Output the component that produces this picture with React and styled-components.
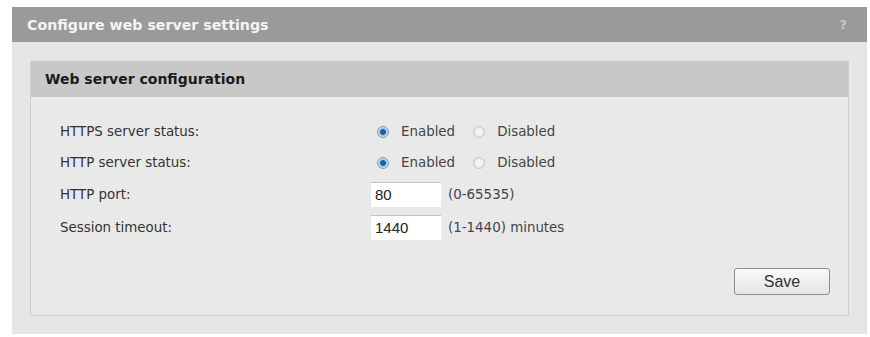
import React from "react";
import styled, { createGlobalStyle } from "styled-components";

const Global = createGlobalStyle`
  html, body { margin: 0; padding: 0; background: #ffffff; }
  body { font-family: "DejaVu Sans", Verdana, sans-serif; }
`;

const Page = styled.div`
  padding: 7px 3px 4px 12px;
`;

const Outer = styled.section`
  background: #e6e6e6;
  width: 855px;
  padding-bottom: 18px;
`;

const OuterHeader = styled.header`
  display: flex;
  align-items: center;
  justify-content: space-between;
  height: 35px;
  background: #9a9a9a;
  padding: 0 20px 0 15px;
  color: #f4f4f4;
  font-weight: bold;
  font-size: 14.2px;
`;

const Help = styled.span`
  color: #c8c8c8;
  font-size: 13px;
`;

const Inner = styled.div`
  margin: 19px 18px 0 18px;
  border: 1px solid #cfcfcf;
  border-top: none;
  background: #e9e9e9;
  height: 254px;
  display: flex;
  flex-direction: column;
`;

const InnerHeader = styled.div`
  height: 36px;
  background: #c8c8c8;
  display: flex;
  align-items: center;
  padding-left: 14px;
  font-weight: bold;
  font-size: 14px;
  color: #1a1a1a;
`;

const Form = styled.div`
  padding: 19px 0 0 29px;
  display: grid;
  grid-template-columns: 311px 1fr;
  grid-template-rows: 31px 31px 32px 34px;
  font-size: 13.4px;
  color: #333;
`;

const Label = styled.div`
  display: flex;
  align-items: center;
`;

const Field = styled.div`
  display: flex;
  align-items: center;
  gap: 7px;
`;

const RadioOpt = styled.label`
  display: flex;
  align-items: center;
  gap: 12px;
  margin-right: 5px;
  margin-left: 6px;
  color: #444;
`;

const RadioDot = styled.span`
  width: 12px;
  height: 12px;
  border-radius: 50%;
  box-sizing: border-box;
  border: 1px solid ${(p) => (p.$on ? "#7d9bb5" : "#c8c8c8")};
  background: ${(p) =>
    p.$on
      ? "radial-gradient(circle, #1d5f9a 0 2.5px, #8fc3ea 3.2px, #dbe9f5 5.5px)"
      : "radial-gradient(circle, #f4f4f4 0 3px, #dedede 5.5px)"};
`;

const TextBox = styled.div`
  width: 70px;
  height: 25px;
  box-sizing: border-box;
  background: #ffffff;
  border-top: 1px solid #c4c4c4;
  display: flex;
  align-items: center;
  padding-left: 4px;
  font-family: "Liberation Sans", Arial, sans-serif;
  font-size: 15px;
  color: #222;
`;

const Hint = styled.span`
  color: #444;
`;

const Footer = styled.div`
  margin-top: auto;
  display: flex;
  justify-content: flex-end;
  padding: 0 18px 20px 0;
`;

const Button = styled.button`
  width: 96px;
  height: 27px;
  border: 1px solid #8e8e8e;
  border-radius: 3px;
  background: linear-gradient(#fafafa, #e4e4e4);
  font-family: "Liberation Sans", Arial, sans-serif;
  font-size: 16px;
  color: #333;
  padding: 0;
`;

const Radio = ({ on, children }) => (
  <RadioOpt>
    <RadioDot $on={on} />
    {children}
  </RadioOpt>
);

export default function App() {
  return (
    <>
      <Global />
      <Page>
        <Outer>
          <OuterHeader>
            <span>Configure web server settings</span>
            <Help>?</Help>
          </OuterHeader>
          <Inner>
            <InnerHeader>Web server configuration</InnerHeader>
            <Form>
              <Label>HTTPS server status:</Label>
              <Field>
                <Radio on>Enabled</Radio>
                <Radio>Disabled</Radio>
              </Field>
              <Label>HTTP server status:</Label>
              <Field>
                <Radio on>Enabled</Radio>
                <Radio>Disabled</Radio>
              </Field>
              <Label>HTTP port:</Label>
              <Field>
                <TextBox>80</TextBox>
                <Hint>(0-65535)</Hint>
              </Field>
              <Label>Session timeout:</Label>
              <Field>
                <TextBox>1440</TextBox>
                <Hint>(1-1440) minutes</Hint>
              </Field>
            </Form>
            <Footer>
              <Button>Save</Button>
            </Footer>
          </Inner>
        </Outer>
      </Page>
    </>
  );
}
